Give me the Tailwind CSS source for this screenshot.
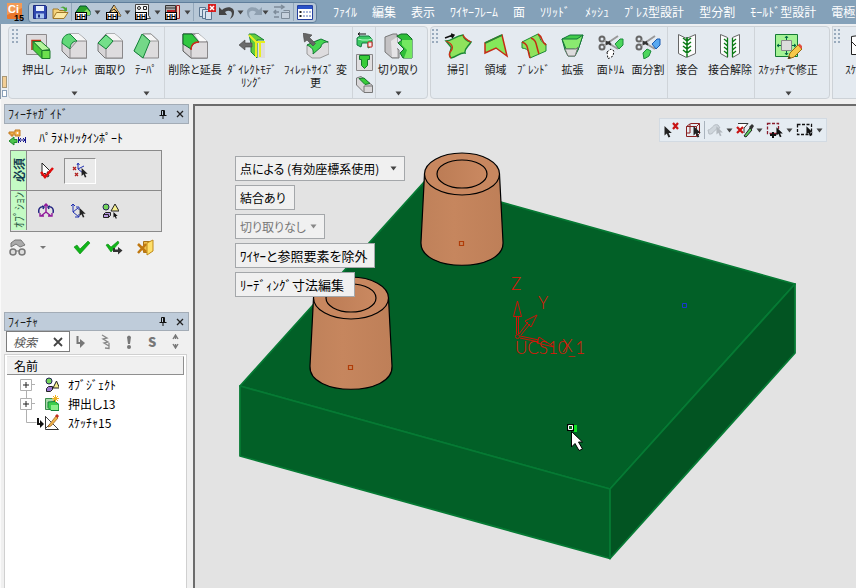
<!DOCTYPE html>
<html lang="ja">
<head>
<meta charset="utf-8">
<title>Ci 15</title>
<script src="https://cdn.jsdelivr.net/npm/@tailwindcss/browser@4"></script>
</head>
<body class="flex h-screen flex-col overflow-hidden bg-[#f0f0f0] font-['Noto_Sans_CJK_JP','Noto_Sans',sans-serif] text-xs leading-4 text-[#1c1c1c] [font-feature-settings:'palt']">

<svg class="hidden" aria-hidden="true">
  <symbol id="dd" viewBox="0 0 7 5"><path d="M0.5 .5h6L3.500 4.500z" fill="#444"/></symbol>
  <symbol id="grip" viewBox="0 0 7 15"><g fill="#9aabbd"><path d="M0 0h2v2H0zM4 0h2v2H4zM0 4h2v2H0zM4 4h2v2H4zM0 8h2v2H0zM4 8h2v2H4zM0 12h2v2H0zM4 12h2v2H4z"/></g></symbol>
  <symbol id="hh" viewBox="0 0 12 8"><rect x=".5" y=".5" width="11" height="7" fill="#fff" stroke="#000"/><text x="6" y="6.500" font-size="7" font-weight="bold" text-anchor="middle" font-family="Liberation Sans" fill="#000">HH</text></symbol>
  <symbol id="cursor" viewBox="0 0 8 12"><path d="M.5 0v9.500L2.800 7.500 4.500 11.500 6.300 10.700 4.600 7H7.800z"/></symbol>
  <symbol id="pin" viewBox="0 0 8 9"><path d="M2.500.5h3v5h-3zM4.500.5v5M.5 5.500h7M4 6v3" fill="none" stroke="#111"/></symbol>
  <symbol id="close" viewBox="0 0 8 8"><path d="M1 1l6 6M7 1L1 7" stroke="#222" stroke-width="1.300" fill="none"/></symbol>
  <symbol id="scissors" viewBox="0 0 26 26"><g fill="none" stroke="#666" stroke-width="2"><circle cx="4" cy="6" r="2.500"/><circle cx="4" cy="14" r="2.500"/><path d="M6 7.500L20 16M6 12.500L20 3" stroke="#999"/></g><path d="M8 8.700l5 3M8 11.300l4-2.700" stroke="#333" stroke-width="2"/></symbol>
</svg>

<header class="flex h-6 shrink-0 items-center gap-4 bg-[#84a1b9] pl-1">
  <div class="flex shrink-0 items-center gap-1">
    <svg width="20" height="20" viewBox="0 0 20 20" aria-label="Ci 15"><rect x="3" y="1" width="15" height="16" rx="1" fill="#e9772c"/><path d="M3 1h15v5L3 13z" fill="#f29a55"/><text x="4" y="11" font-family="Liberation Sans" font-weight="bold" font-size="11" fill="#fff">Ci</text><text x="10" y="19" font-family="Liberation Sans" font-weight="bold" font-size="9" fill="#000">15</text></svg>
    <div class="flex h-[21px] items-center rounded-sm border border-[#5f7e9b] bg-[#b7c7d6] text-[#333]">
      <button class="flex w-[21px] justify-center" aria-label="保存"><svg width="14" height="14" viewBox="0 0 14 14"><path d="M.5.5h12l1 1v12H.5z" fill="#3048b0" stroke="#1c2c80"/><path d="M3 1h8v5H3z" fill="#e8f0fc"/><path d="M3 8.500h8v5H3z" fill="#a8c4f0"/><path d="M5 9.500h2v3H5z" fill="#1c2c80"/></svg></button>
      <button class="flex w-[21px] justify-center" aria-label="開く"><svg width="17" height="15" viewBox="0 0 17 15"><path d="M1 13V4h5l1.500 1.500H13V8" fill="#f4d27a" stroke="#a07828"/><path d="M1 13.500L4.500 7.500H16l-4 6z" fill="#fce9a4" stroke="#a07828"/><path d="M8 3c2-2 4-2 6 0l1-1v4h-4l1.500-1.500C11.500 3 10 2.500 8 3z" fill="#4aa83a"/></svg></button>
      <span class="h-[18px] w-px bg-[#93a7ba]"></span>
      <button class="flex h-[18px] w-[22px] justify-center" aria-label="表示"><svg width="18" height="18" viewBox="0 0 18 18"><path d="M2 9L6 3h6l4 5v4h-4z" fill="#2aa02a" stroke="#053"/><path d="M10 9l3-3 3 3v3h-6z" fill="#8ae060"/><use href="#hh" x="1" y="9" width="12" height="8"/></svg></button>
      <svg class="mr-0.5" width="7" height="5"><use href="#dd"/></svg>
      <button class="flex h-[18px] w-[21px] justify-center" aria-label="形状"><svg width="18" height="18" viewBox="0 0 18 18"><path d="M9 2L2 13h14z" fill="#f5d890" stroke="#222"/><path d="M9 2v10l7 1z" fill="#e0b060"/><path d="M5 9l4-3 4 4" stroke="#222" fill="none"/><use href="#hh" x="1" y="9" width="12" height="8"/></svg></button>
      <svg width="7" height="5"><use href="#dd"/></svg>
      <button class="flex h-[18px] w-[23px] justify-center" aria-label="穴"><svg width="18" height="18" viewBox="0 0 18 18"><path d="M1.500 1.500h13v11l2 3h-15z" fill="#f4f4f4" stroke="#444"/><circle cx="5" cy="5" r="1.500" fill="none" stroke="#222"/><path d="M9.500 3.500h3v3h-3z" fill="none" stroke="#222"/><use href="#hh" x="1" y="9" width="12" height="8"/></svg></button>
      <svg width="7" height="5"><use href="#dd"/></svg>
      <button class="flex h-[18px] w-[23px] justify-center" aria-label="型"><svg width="18" height="18" viewBox="0 0 18 18"><path d="M1.500 2.500h10v10h-10zM2 5h9" fill="#aaa" stroke="#333"/><path d="M12.500 2.500h3v13h-3z" fill="#f3c8b8" stroke="#922"/><path d="M3 8h8" stroke="#b22" stroke-width="2"/><use href="#hh" x="1" y="9" width="12" height="8"/></svg></button>
      <svg class="mr-0.5" width="7" height="5"><use href="#dd"/></svg>
      <span class="h-[18px] w-px bg-[#93a7ba]"></span>
      <button class="flex h-[18px] w-[25px] justify-center" aria-label="削除"><svg width="18" height="18" viewBox="0 0 18 18"><g fill="#d7e2ee" stroke="#5b7590"><path d="M1.500 4.500h6v9h-6z"/><path d="M4.500 6.500h6v9h-6z"/><path d="M7.500 8.500h6v8h-6z"/></g><path d="M10 1h8v8h-8z" fill="#d81e1e"/><path d="M12 3l4 4M16 3l-4 4" stroke="#fff" stroke-width="1.500"/></svg></button>
      <button class="flex w-[18px] justify-center" aria-label="元に戻す"><svg width="18" height="16" viewBox="0 0 18 16"><path d="M3 6C8 1 16 3 15 9c0 3-2 5-4 6 5-8-1-10-5-7l2 3H0V3z" fill="#444"/></svg></button>
      <svg width="7" height="5"><use href="#dd"/></svg>
      <button class="flex w-[18px] justify-center" aria-label="やり直し"><svg width="18" height="16" viewBox="0 0 18 16"><path d="M15 6C10 1 2 3 3 9c0 3 2 5 4 6-5-8 1-10 5-7l-2 3h8V3z" fill="#8fa0b0"/></svg></button>
      <svg class="mr-0.5" width="7" height="5"><use href="#dd"/></svg>
      <button class="flex w-[22px] justify-center" aria-label="更新"><svg width="18" height="18" viewBox="0 0 18 18" fill="none" stroke="#7d8b99"><path d="M1 4h9M1 9h5M1 14h5M8 2l3 2-3 2M3 7L1 9l2 2" stroke-width="1.500"/><path d="M8.500 9.500h8v6h-8zM10.500 7.500h6v2" fill="#c5d0dc"/></svg></button>
      <span class="h-[18px] w-px bg-[#93a7ba]"></span>
      <button class="flex w-[22px] justify-center" aria-label="一覧"><svg width="16" height="15" viewBox="0 0 16 15"><path d="M.5.5h15v14H.5z" fill="#fff" stroke="#2440a0"/><path d="M1 1h14v3H1z" fill="#2a52c8"/><path d="M2.500 7h2M2.500 11h2" stroke="#222" stroke-width="2"/><path d="M6 7h8M6 11h8" stroke="#5570b8" stroke-dasharray="2 1"/></svg></button>
    </div>
  </div>
  <nav class="flex shrink-0 gap-[15px] whitespace-nowrap text-white">
    <a href="#">ﾌｧｲﾙ</a><a href="#">編集</a><a href="#">表示</a><a href="#">ﾜｲﾔｰﾌﾚｰﾑ</a><a href="#">面</a><a href="#">ｿﾘｯﾄﾞ</a><a href="#">ﾒｯｼｭ</a><a href="#">ﾌﾟﾚｽ型設計</a><a href="#">型分割</a><a href="#">ﾓｰﾙﾄﾞ型設計</a><a href="#">電極</a>
  </nav>
</header>

<div class="flex h-[75px] shrink-0 gap-0.5 overflow-hidden border-l border-[#8a98a6] bg-[#eceff2] pt-0.5 text-[11px] leading-[13px]">
  <div class="flex w-[5px] shrink-0 flex-col justify-end gap-0.5 pb-0.5 pl-px">
    <span class="h-3 w-[5px] border border-[#a89878] bg-[#f4cf96]"></span><span class="h-[7px] w-[5px] border border-[#8aa0b8] bg-white"></span>
  </div>

  <section class="flex w-[420px] shrink-0 rounded-sm border border-[#cdd2d7] bg-[#e4eaf0]" aria-label="ソリッド編集">
    <svg class="mt-0.5 mr-px ml-[3px] shrink-0" width="7" height="15"><use href="#grip"/></svg>
    <button class="flex w-9 flex-col items-center pt-1.5"><svg class="mb-1 h-[26px] w-[26px] shrink-0" viewBox="0 0 26 26"><path d="M1.500 1.500h20v20h-20z" fill="#dedcde" stroke="#8c8a8c"/><path d="M7 17V7.500h9" fill="none" stroke="#c03010" stroke-width="1.500"/><path d="M8 8.500h8l9 8-8 1z" fill="#b4f59a" stroke="#1c7a2c"/><path d="M8 8.500l9 9v8l-9-9z" fill="#48c838" stroke="#1c7a2c"/><path d="M17 17.500h8v8h-8z" fill="#6de04e" stroke="#1c7a2c"/></svg>押出し</button>
    <button class="flex w-9 flex-col items-center pt-1.5"><svg class="mb-1 h-[26px] w-[26px] shrink-0" viewBox="0 0 26 26"><path d="M1 10L9 1h9l8 7v17H8L1 18z" fill="#d6d4d6" stroke="#777"/><path d="M9 1h9l8 7H15z" fill="#f5f5f5"/><path d="M9 25V16L16 8h9.500v17z" fill="#dedcde" stroke="#8a888a"/><path d="M1 10C1 4 5 1 9 1l7 7c-4 0-7 3-7 8z" fill="#60d878" stroke="#14833a"/></svg>ﾌｨﾚｯﾄ<svg class="mt-[15px]" width="7" height="5"><use href="#dd"/></svg></button>
    <button class="flex w-9 flex-col items-center pt-1.5"><svg class="mb-1 h-[26px] w-[26px] shrink-0" viewBox="0 0 26 26"><path d="M1 10L9 1h9l8 7v17H8L1 18z" fill="#d6d4d6" stroke="#777"/><path d="M9 1h9l8 7H16z" fill="#f5f5f5"/><path d="M9 25V16L16 8h9.500v17z" fill="#dedcde" stroke="#8a888a"/><path d="M1 10L9 2l7 6-7 8z" fill="#74e08a" stroke="#14833a"/></svg>面取り</button>
    <button class="flex w-9 flex-col items-center pt-1.5"><svg class="mb-1 h-[26px] w-[26px] shrink-0" viewBox="0 0 26 26"><path d="M10 1h8l7.500 7v17H10L1 18z" fill="#dedcde" stroke="#8a888a"/><path d="M10 1h8l7.500 7h-8.500z" fill="#f5f5f5" stroke="#999"/><path d="M1 18L9 1l8 7-7 17z" fill="#74d888" stroke="#14833a"/></svg>ﾃｰﾊﾟ<svg class="mt-[15px]" width="7" height="5"><use href="#dd"/></svg></button>
    <span class="w-px bg-[#cfd4d9]"></span>
    <button class="flex w-[60px] flex-col items-center pt-1.5 whitespace-nowrap"><svg class="mb-1 h-[26px] w-[26px] shrink-0" viewBox="0 0 26 26"><path d="M1 1h16l8.500 8v16H9L1 18z" fill="#d6d4d6" stroke="#555"/><path d="M13 1h4l8 7h-8z" fill="#fafafa"/><path d="M9 25V16c0-4 3-7 8-7h8.500v16z" fill="#dedcde" stroke="#8a888a"/><path d="M1 1h9l7 8c-4 0-8 3-8 7L1 11z" fill="#30c840" stroke="#10602a"/><path d="M9 17c0-5 3-8 8-8" fill="none" stroke="#d02818" stroke-width="1.500"/></svg>削除と延長</button>
    <button class="flex w-[54px] flex-col items-center pt-1.5"><svg class="mb-1 h-[26px] w-[26px] shrink-0" viewBox="0 0 26 26"><path d="M17 8h9v17h-9z" fill="#dedcde"/><path d="M10 1h6l9 6h-7v18l-6-6v-8z" fill="#62cc40" stroke="#17803a"/><path d="M10 2l7 7v15M17 9h9M17 9h4v15" fill="none" stroke="#e8ef20" stroke-width="2"/><path d="M0 12l6-5v3h7v4H6v3z" fill="#6b6b6b" stroke="#444" stroke-width=".6"/></svg>ﾀﾞｲﾚｸﾄﾓﾃﾞ<br>ﾘﾝｸﾞ</button>
    <button class="flex w-[73px] flex-col items-center pt-1.5"><svg class="mb-1 h-[26px] w-[26px] shrink-0" viewBox="0 0 26 26"><path d="M4 12l11-5 11 2v12l-9 4H9l-5-4z" fill="#dedcde" stroke="#999"/><path d="M4 12c4 2 7 4 6 9l8-7c0-3 3-5 7-5l-7-3z" fill="#45d650" stroke="#137a35"/><path d="M0 0l9 2-2.500 2.500 6 6-2.500 2.500-6-6L1.500 9z" fill="#666" stroke="#444" stroke-width=".6"/></svg>ﾌｨﾚｯﾄｻｲｽﾞ 変<br>更</button>
    <span class="w-px bg-[#cfd4d9]"></span>
    <div class="flex w-[22px] flex-col items-center justify-evenly">
      <button aria-label="曲げ"><svg width="17" height="17" viewBox="0 0 17 17"><path d="M1 6l3-2h9l3 3v7l-4 2v-5H6l-1 4-4-2z" fill="#3cc964" stroke="#137a40"/><path d="M2 7l4 1h6l4-1" fill="none" stroke="#b8ffc8"/><path d="M12 10h4v5h-4z" fill="#f4eaea" stroke="#c22"/><path d="M10 2H2l2-1.500M2 2l2 1.500" stroke="#111" fill="none"/></svg></button>
      <button aria-label="穴"><svg width="17" height="17" viewBox="0 0 17 17"><path d="M.5.5h16v16H.5z" fill="#e0dee0" stroke="#8a888a"/><path d="M3.500 1.500h10v4h-2v6l-3 3-3-3v-6h-2z" fill="#38cc38" stroke="#15782c"/></svg></button>
      <button aria-label="ポケット"><svg width="17" height="17" viewBox="0 0 17 17"><path d="M.5 2L5 .5l11.500 9v7H8L.5 9z" fill="#d9d7d9" stroke="#777"/><path d="M3 2.500l5-.5 6 5.500-5 1z" fill="#38cc38" stroke="#15782c"/><path d="M8 16V10h8.500" fill="none" stroke="#777"/></svg></button>
    </div>
    <span class="w-px bg-[#cfd4d9]"></span>
    <button class="flex w-11 flex-col items-center pt-1.5"><svg class="mb-1 h-[26px] w-[29px] shrink-0" viewBox="0 0 29 26"><path d="M1 4l8-3h4v9l-3 3 5 4v8H8l-7-6z" fill="#c4c2c4" stroke="#777"/><path d="M7 8l6-4v20H8z" fill="#e6e4e6"/><path d="M13 3l4-2h6l5 5v19h-9l-3-5 4-4-6-6 4-3z" fill="#2ebd38" stroke="#116a28"/><path d="M18 7h10v18h-8l3-8-5-5z" fill="#74e860"/></svg>切り取り<svg class="mt-[15px]" width="7" height="5"><use href="#dd"/></svg></button>
  </section>

  <section class="flex w-[400px] shrink-0 rounded-sm border border-[#cdd2d7] bg-[#e4eaf0] whitespace-nowrap" aria-label="面">
    <svg class="mt-0.5 ml-px shrink-0" width="7" height="15"><use href="#grip"/></svg>
    <button class="flex w-[38px] flex-col items-center pt-1.5"><svg class="mb-1 h-[26px] w-[28px] shrink-0" viewBox="0 0 28 26"><path d="M2 8c6 0 9-5 17-6 1 4 4 6 8 7-3 5-7 7-6 11-5-1-8 4-14 5-4-3 1-8 0-11z" fill="#8fe35c" stroke="#1b8a35" stroke-width="1.500"/><path d="M2 8c7 3 8 7 4 11-1 2-1 4 1 6M19 2c1 3 4 5 8 7" fill="none" stroke="#d03018" stroke-width="1.300"/><path d="M1 5l8-3M7 1l3 1-2 3" stroke="#111" fill="none" stroke-width="1.400"/></svg>掃引</button>
    <button class="flex w-[37px] flex-col items-center pt-1.5"><svg class="mb-1 h-[26px] w-[26px] shrink-0" viewBox="0 0 26 26"><path d="M2 10L19 2l5 21-11-8-11 5z" fill="#84e85a" stroke="#c42c14" stroke-width="1.500"/><path d="M2 10L19 2" stroke="#1b8a35" stroke-width="1.500"/></svg>領域</button>
    <button class="flex w-[39px] flex-col items-center pt-1.5"><svg class="mb-1 h-[26px] w-[28px] shrink-0" viewBox="0 0 28 26"><path d="M2 9L18 1c3 5 2 8 8 10v7l-16 7c-1-5 0-9-8-10z" fill="#8fe35c" stroke="#1b8a35"/><path d="M2 9c7 2 5 8 8 16M11 5c6 2 5 8 8 16M18 1c5 3 3 8 8 11" fill="none" stroke="#c42c14" stroke-width="1.500"/></svg>ﾌﾞﾚﾝﾄﾞ</button>
    <button class="flex w-[39px] flex-col items-center pt-1.5"><svg class="mb-1 h-[26px] w-[26px] shrink-0" viewBox="0 0 26 26"><path d="M2 6l8-4h13l-5 15-3 6H8L5 17z" fill="#41cb4a" stroke="#14743a"/><path d="M2 6h15l6-4-5 15-4-1H6z" fill="#8aea70" stroke="#14743a"/><path d="M5 16h11l2-2-3 9H8z" fill="#dcdcdc" stroke="#777"/></svg>拡張</button>
    <button class="flex w-[37px] flex-col items-center pt-1.5"><svg class="mb-1 h-[26px] w-[26px] shrink-0" viewBox="0 0 26 26"><use href="#scissors"/><path d="M17 11l5-5h3v6l-4 4z" fill="#4cd65c" stroke="#1a8a3a"/><path d="M9 19l4-3 3 2-1 5-5 3z" fill="#fff" stroke="#111" stroke-dasharray="2 1.500"/></svg>面ﾄﾘﾑ</button>
    <button class="flex w-[38px] flex-col items-center pt-1.5"><svg class="mb-1 h-[26px] w-[26px] shrink-0" viewBox="0 0 26 26"><use href="#scissors"/><path d="M17 11l5-5h3v6l-4 4z" fill="#58a8f0" stroke="#1a5ab0"/><path d="M8 20l4-4 4 2-2 5-5 3z" fill="#4cd65c" stroke="#1a8a3a"/></svg>面分割</button>
    <span class="w-px bg-[#cfd4d9]"></span>
    <button class="flex w-[38px] flex-col items-center pt-1.5"><svg class="mb-1 h-[26px] w-5 shrink-0" viewBox="0 0 20 26"><path d="M1.500 1.500l8 4 9-4v19l-9 4-8-4z" fill="#fcfcfc" stroke="#666"/><path d="M10 4v20M6 5l4 3 4-3M6 9l4 3 4-3M6 13l4 3 4-3M6 17l4 3 4-3" fill="none" stroke="#0a7a14" stroke-width="1.500"/></svg>接合</button>
    <button class="flex w-12 flex-col items-center pt-1.5"><svg class="mb-1 h-[26px] w-[22px] shrink-0" viewBox="0 0 22 26"><path d="M1.500 1.500l7 3v20l-7-4zM20.500 1.500l-7 3v20l7-4z" fill="#fcfcfc" stroke="#666"/><path d="M8.500 5v19M5 6l3 2.500M5 10l3 2.500M5 14l3 2.500M5 18l3 2.500M13.500 5v19M17 6l-3 2.500M17 10l-3 2.500M17 14l-3 2.500M17 18l-3 2.500" fill="none" stroke="#0a7a14" stroke-width="1.300"/></svg>接合解除</button>
    <span class="w-px bg-[#cfd4d9]"></span>
    <button class="flex w-[66px] flex-col items-center pt-1.5"><svg class="mb-1 h-[26px] w-[28px] shrink-0" viewBox="0 0 28 26"><path d="M1.500 1.500h22v22h-22z" fill="#a4f294" stroke="#147a34"/><path d="M7.500 7.500h10v10h-10z" fill="#dcdcdc" stroke="#888"/><path d="M12.500 3v4M12.500 18v4M3 12.500h4M18 12.500h4M11 5l1.500-2L14 5M11 20l1.500 2 1.500-2M5 11l-2 1.500L5 14M20 11l2 1.500-2 1.500" stroke="#064" fill="none"/><path d="M14 26l2-6 8-8 4 4-8 8z" fill="#f7c84a" stroke="#9a6a10"/><path d="M24 12l1.500-1.500 3 3L27 16z" fill="#e25040"/><path d="M14 26l1-3 2 2z" fill="#333"/></svg>ｽｹｯﾁｬで修正<svg class="mt-[15px]" width="7" height="5"><use href="#dd"/></svg></button>
  </section>

  <section class="flex w-[120px] shrink-0 border border-[#cdd2d7] bg-[#e4eaf0]" aria-label="スケッチャ">
    <svg class="mt-0.5 ml-px shrink-0" width="7" height="15"><use href="#grip"/></svg>
    <button class="flex w-9 flex-col items-center pt-1.5 whitespace-nowrap"><svg class="mb-1 h-[26px] w-[18px] shrink-0" viewBox="0 0 18 26"><path d="M1.500 3.500l15-2v20h-15z" fill="#fff" stroke="#222"/><path d="M2 9l9 9" stroke="#222"/></svg>ｽｹｯﾁｬ</button>
  </section>
</div>

<div class="flex min-h-0 flex-1 border-l border-[#fafafa]">
  <aside class="flex w-[192px] shrink-0 flex-col pt-[5px] pl-[3px]">
    <section aria-label="フィーチャガイド" class="mr-1 h-52">
      <h2 class="flex h-5 items-center gap-[9px] border border-[#a3acb6] bg-[#bfccda] pr-1 pl-[3px]"><span class="flex-1">ﾌｨｰﾁｬｶﾞｲﾄﾞ</span><button aria-label="固定"><svg width="8" height="9"><use href="#pin"/></svg></button><button aria-label="閉じる"><svg width="8" height="8"><use href="#close"/></svg></button></h2>
      <div class="flex h-[26px] items-center gap-3 pt-0.5 pl-1">
        <svg width="19" height="18" viewBox="0 0 19 18"><path d="M1 3h6V1h5v6H7V5H5v2H3V5H1z" fill="#f2b04a" stroke="#c07820"/><circle cx="9.500" cy="4" r="1" fill="#fff"/><path d="M1 12l5-4v2.500h3v3H6V16z" fill="#4cc44c" stroke="#1f8a2c"/><path d="M10.500 8v6M17.500 8v6M10 11h8M13 9l-2 2 2 2M15 9l2 2-2 2" stroke="#14148c" fill="none"/></svg>
        <span class="text-black">ﾊﾟﾗﾒﾄﾘｯｸｲﾝﾎﾟｰﾄ</span>
      </div>
      <div class="mr-[27px] ml-1.5 grid grid-cols-[16px_1fr] grid-rows-2 border border-[#8a8a8a] bg-[#e3e3e3]">
        <div class="flex h-10 items-center justify-center border-r border-b border-[#8a8a8a] bg-[#c4fbc4]"><span class="rotate-180 font-bold text-[#143c50] [text-orientation:sideways] [writing-mode:vertical-rl]">必須</span></div>
        <div class="flex h-10 items-center gap-px border-b border-[#8a8a8a] pl-1">
          <button class="flex h-[26px] w-8 items-center justify-center" aria-label="要素選択"><svg width="14" height="17" viewBox="0 0 14 17"><path d="M2 1v13l3-3 2 4 2-1-2-4h4z" fill="#fff" stroke="#222"/><path d="M1 10l4 5 8-9" stroke="#e00c0c" stroke-width="2.500" fill="none"/></svg></button>
          <button class="flex h-[26px] w-8 items-center justify-center border-t border-r border-b border-l border-t-[#909090] border-r-white border-b-white border-l-[#909090] bg-[#eaeaea]" aria-label="点指定"><svg width="16" height="16" viewBox="0 0 16 16"><path d="M1 4l3 3M4 4L1 7M3 10l3 3M6 10l-3 3" stroke="#b02020" stroke-width="1.300"/><path d="M6 1v5l6-3M6 6l5 4M5 2l1-2 1.500 2" stroke="#2030b0" fill="none"/><use href="#cursor" x="9" y="5" width="7" height="10" fill="#222"/></svg></button>
        </div>
        <div class="flex h-[39px] items-center justify-center overflow-hidden border-r border-[#8a8a8a] bg-[#c4fbc4]"><span class="rotate-180 text-xs whitespace-nowrap text-[#2f6048] [text-orientation:sideways] [writing-mode:vertical-rl]">ｵﾌﾟｼｮﾝ</span></div>
        <div class="flex h-[39px] items-center pl-[3px]">
          <button class="flex w-8 justify-center" aria-label="回転"><svg width="16" height="15" viewBox="0 0 16 15" fill="none"><path d="M8 1v8l-5 4M8 9l5 4M6 3l2-2 2 2M6 13H2v-3M10 13h4v-3" stroke="#90189a" stroke-width="1.400"/><path d="M6 4C2 3 0 6 1 10M10 4c4-1 6 2 5 6M4 3l2 1-1 2M12 3l-2 1 1 2" stroke="#222280" stroke-width="1.500"/></svg></button>
          <button class="flex w-8 justify-center" aria-label="軸"><svg width="16" height="16" viewBox="0 0 16 16"><path d="M3 1v8l5-4M3 9l6 5M1 3l2-2 2 2M6 4h3v3M5 14h4v-3" stroke="#2030b0" fill="none"/><use href="#cursor" x="9" y="5" width="7" height="10" fill="#222"/></svg></button>
          <button class="flex w-8 justify-center" aria-label="オブジェクト"><svg width="17" height="16" viewBox="0 0 17 16"><circle cx="4" cy="4" r="3" fill="#74d45c" stroke="#225"/><path d="M9 8l4-7 4 7z" fill="#f7f090" stroke="#222"/><path d="M1.500 11.500l2-2h5v3l-2 2h-5zM1.500 11.500h5v3" fill="#b89ae0" stroke="#222"/><use href="#cursor" x="11" y="9" width="5" height="7" fill="#111"/></svg></button>
        </div>
      </div>
      <div class="flex h-[31px] items-center pl-[5px]">
        <button class="w-[17px]" aria-label="プレビュー"><svg width="17" height="17" viewBox="0 0 17 17" fill="#aaa" stroke="#777"><path d="M2 8V4l4-3h6l4 5-5 2-4-3z"/><circle cx="4" cy="13" r="3" fill="#ddd" stroke-width="1.500"/><circle cx="13" cy="13" r="3" fill="#ddd" stroke-width="1.500"/><path d="M7 12h3"/></svg></button>
        <svg class="mr-[27px] ml-3.5" width="6" height="5" viewBox="0 0 6 5"><path d="M0 1h6L3 4z" fill="#777"/></svg>
        <button class="w-[18px]" aria-label="OK"><svg width="18" height="15" viewBox="0 0 18 15"><path d="M1 7l3-2 3 4 8-8 2 2L7 14z" fill="#10b418" stroke="#0c8a12" stroke-width=".6"/></svg></button>
        <button class="ml-3.5 w-[18px]" aria-label="適用"><svg width="18" height="15" viewBox="0 0 18 15"><path d="M1 5l2-1 3 3 7-6 1 2-8 9z" fill="#10b418" stroke="#0c8a12" stroke-width=".6"/><path d="M8 8v4h5v2.500l4.500-4L13 7v2.500h-3V8z" fill="#333"/></svg></button>
        <button class="ml-3.5" aria-label="終了"><svg width="18" height="17" viewBox="0 0 18 17"><path d="M6.500 2.500h7v11h-7z" fill="#f0c050" stroke="#a8741a"/><path d="M10 4l6-3v11l-6 4z" fill="#ffe06a" stroke="#c08a1a"/><path d="M1 5l8 8M9 5l-8 9" stroke="#c07810" stroke-width="2.500"/></svg></button>
      </div>
    </section>

    <section aria-label="フィーチャ" class="flex min-h-0 flex-1 flex-col">
      <h2 class="mr-1 flex h-[19px] shrink-0 items-center gap-[9px] border border-[#a3acb6] bg-[#bfccda] pr-1 pl-[3px]"><span class="flex-1">ﾌｨｰﾁｬ</span><button aria-label="固定"><svg width="8" height="9"><use href="#pin"/></svg></button><button aria-label="閉じる"><svg width="8" height="8"><use href="#close"/></svg></button></h2>
      <div class="flex h-[21px] shrink-0 items-center pl-0.5">
        <label class="flex h-[21px] w-16 items-center border border-[#7c7c7c] bg-white pr-1.5 pl-1.5"><input type="text" aria-label="検索" placeholder="検索" class="min-w-0 flex-1 bg-transparent text-xs italic outline-none placeholder:text-[#555]"><svg width="10" height="10" viewBox="0 0 10 10"><path d="M1 1l8 8M9 1L1 9" stroke="#444" stroke-width="1.800"/></svg></label>
        <div class="flex flex-1 items-center justify-between pr-3.5 pl-1.5 text-[#777]">
          <button aria-label="次へ"><svg width="9" height="12" viewBox="0 0 9 12"><path d="M1.500 0v7H5" fill="none" stroke="#777" stroke-width="2"/><path d="M4 3l5 4-5 5z" fill="#777"/></svg></button>
          <button aria-label="ばね"><svg width="10" height="16" viewBox="0 0 10 16"><path d="M1 1l5 3-4 1 5 3-4 1 5 3M8 9v5.500L4 14" fill="none" stroke="#888" stroke-width="1.300"/></svg></button>
          <button aria-label="警告"><svg width="6" height="14" viewBox="0 0 6 14"><path d="M1 2Q3-1 5 2L4 9H2z" fill="#777"/><circle cx="3" cy="12" r="2" fill="#777"/></svg></button>
          <button class="text-[13px] font-black">S</button>
          <button aria-label="並べ替え"><svg width="7" height="15" viewBox="0 0 7 15"><path d="M1 5l2.500-4L6 5M1 10l2.500 4L6 10M3.500 1v4M3.500 10v4" fill="none" stroke="#777" stroke-width="1.400"/></svg></button>
        </div>
      </div>
      <div class="mt-0.5 mr-1.5 min-h-0 flex-1 border border-b-0 border-[#d0d0d0] bg-white p-0.5 pt-px">
        <div class="flex h-[19px] items-center border-t border-r border-b border-t-[#e4e4e4] border-r-[#8f8f8f] border-b-[#8f8f8f] bg-[#f0f0f0] pl-[7px] text-black">名前</div>
        <ul class="text-black" role="tree">
          <li class="flex h-[19px] items-center gap-2" role="treeitem"><svg width="52" height="19" viewBox="0 0 52 19"><path d="M19.500 9v10M25 9.500h3" stroke="#b0b0b0"/><path d="M13.500 4.500h11v11h-11z" fill="#fff" stroke="#b0b0b0"/><path d="M16 10h6M19 7v6" stroke="#222"/><circle cx="42" cy="6" r="3" fill="#74d45c" stroke="#225"/><path d="M46 13l3.500-7 3 7z" fill="#f7f090" stroke="#222"/><path d="M39.500 13.500l2-2h4v3l-2 2h-4z" fill="#9a78d0" stroke="#222"/></svg><span class="pl-px">ｵﾌﾞｼﾞｪｸﾄ</span></li>
          <li class="flex h-[19px] items-center gap-2" role="treeitem"><svg width="52" height="19" viewBox="0 0 52 19"><path d="M19.500 0v19M25 9.500h3" stroke="#b0b0b0"/><path d="M13.500 4.500h11v11h-11z" fill="#fff" stroke="#b0b0b0"/><path d="M16 10h6M19 7v6" stroke="#222"/><path d="M38.500 4.500h9v11h-9z" fill="#a8d8a8" stroke="#3a8a4a"/><path d="M41 8l7-.500 4 3v6h-8l-3-3z" fill="#3cce4a" stroke="#14803a"/><path d="M44 11h7v5h-7z" fill="#8af08a"/><path d="M48.500 1v7M45 4.500h7M46 2l5 5M51 2l-5 5" stroke="#f0b020"/></svg><span class="pl-px">押出し13</span></li>
          <li class="flex h-[19px] items-center gap-2" role="treeitem"><svg width="52" height="19" viewBox="0 0 52 19"><path d="M19.500 0v9.500h10" stroke="#b0b0b0" fill="none"/><path d="M31 5v6h3" fill="none" stroke="#111" stroke-width="2"/><path d="M33 7l4 4-4 4z" fill="#111"/><path d="M38.500 3.500v13h13z" fill="#fff" stroke="#333"/><path d="M38 3l13 13M38 16l5-5" stroke="#444"/><path d="M42 12l7-9 2 2-7 8-3 1z" fill="#f2b54a" stroke="#905818" stroke-width=".7"/><path d="M48 3l2-2 2 2-1.500 2z" fill="#c03020"/></svg><span class="pl-px">ｽｹｯﾁｬ15</span></li>
        </ul>
      </div>
    </section>
  </aside>

  <main class="relative mt-[5px] min-w-0 flex-1 overflow-hidden border-t-2 border-l-2 border-[#6c6c6c] bg-[#e3e3e3]">
    <svg class="absolute inset-0 h-full w-full" role="img" aria-label="3Dモデル">
      <defs>
        <linearGradient id="side"><stop offset="0" stop-color="#bf815a"/><stop offset=".4" stop-color="#c6865e"/><stop offset="1" stop-color="#be7f58"/></linearGradient>
        <linearGradient id="bore"><stop offset="0" stop-color="#bc7c55"/><stop offset="1" stop-color="#ca8961"/></linearGradient>
        <g id="boss" stroke="#000" stroke-width="1.200">
          <path d="M-37.500 0L-41 68c-2 31 84 31 82 0L37.500 0z" fill="url(#side)"/>
          <ellipse rx="37.500" ry="21" fill="#c8875f"/><ellipse cy="0" rx="25" ry="14" fill="url(#bore)"/>
          <path d="M-2.500 67.500h4v4h-4z" fill="none" stroke="#b03c08"/>
        </g>
      </defs>
      <g transform="translate(-195 -106)">
        <g stroke="#067a34" stroke-width="1.800" stroke-linejoin="round">
          <path d="M240 386L425 181 795 284 610 489z" fill="#026027"/>
          <path d="M240 386L610 489V558.500L240 456z" fill="#026027"/>
          <path d="M610 489L795 284V353L610 558.500z" fill="#025422"/>
        </g>
        <use href="#boss" x="462" y="174"/>
        <use href="#boss" x="351" y="298"/>
        <g fill="none" stroke="#d01408">
          <circle cx="517.500" cy="336.500" r="2"/>
          <path d="M516.500 334V316M518.500 334V316M513.500 316.500h8L517.500 301zM519 334l9-12M521 335l9-11M525 321l6 6 6-12zM520 336l19 4M520 338l19 4M539 337l-2 6 17 4z"/>
        </g>
        <g fill="#e01408" font-family="Lato" font-weight="300" font-size="17"><text x="511" y="290">Z</text><text x="538" y="309">Y</text><text x="562" y="352">X</text><text x="515" y="354">UCS10_1</text></g>
        <path d="M682.500 303.500h4v4h-4z" fill="none" stroke="#1838d0"/>
        <path d="M574 425h3v7h-3z" fill="#0ce020"/>
        <path d="M567 424h7v7h-7z" fill="#000"/><path d="M568.500 425.500h4v4h-4z" fill="#0a6a1c" stroke="#fff"/>
        <path d="M571.500 431.500v15.500l3.500-3.500 4 7 3.500-1.500-4-7h4z" fill="#fff" stroke="#000"/>
      </g>
    </svg>

    <div class="absolute top-[50px] left-10 flex flex-col items-start gap-1 text-[13px] text-black">
      <div class="relative"><select aria-label="配置方法" class="h-[25px] w-[170px] appearance-none border border-[#a4a7aa] bg-[#f0f0f0] pl-1 text-xs outline-none"><option>点による (有効座標系使用)</option></select><svg class="pointer-events-none absolute top-2.5 right-2" width="7" height="5"><use href="#dd"/></svg></div>
      <button class="h-[25px] w-15 border border-[#a4a7aa] bg-[#f0f0f0] pl-1 text-left text-xs whitespace-nowrap">結合あり</button>
      <div class="relative"><select disabled aria-label="切り取り" class="h-[25px] w-[90px] appearance-none border border-[#a4a7aa] bg-[#f0f0f0] pl-1 text-xs text-[#777] opacity-100 outline-none"><option>切り取りなし</option></select><svg class="pointer-events-none absolute top-2.5 right-2 opacity-60" width="7" height="5"><use href="#dd"/></svg></div>
      <button class="h-[25px] w-[140px] border border-[#a4a7aa] bg-[#f0f0f0] pl-1 text-left whitespace-nowrap">ﾜｲﾔｰと参照要素を除外</button>
      <button class="h-[25px] w-[120px] border border-[#a4a7aa] bg-[#f0f0f0] pl-1 text-left whitespace-nowrap">ﾘｰﾃﾞｨﾝｸﾞ寸法編集</button>
    </div>

    <div class="absolute top-3 right-[29px] flex h-6 items-center border border-[#d2dae2] bg-[#e5ecf2] pr-[3px] pl-px" role="toolbar" aria-label="選択">
      <button class="flex w-[21px] justify-center" aria-label="選択解除"><svg width="16" height="16" viewBox="0 0 16 16"><use href="#cursor" x="0" y="4" width="8" height="12" fill="#222"/><path d="M9 1l5 6M14 1L9 7" stroke="#c81414" stroke-width="2.200"/></svg></button>
      <button class="flex w-[22px] justify-center" aria-label="立体選択"><svg width="16" height="16" viewBox="0 0 16 16"><path d="M1.500 4.500h10v10h-10zM1.500 4.500l4-3h9v10l-3 3M11.500 4.500l3-3M5 2v9H2" fill="none" stroke="#8a2020"/><use href="#cursor" x="8" y="4" width="8" height="12" fill="#222"/></svg></button>
      <span class="h-[18px] w-px bg-[#a9b3bd]"></span>
      <button class="flex w-[21px] justify-center" disabled aria-label="面選択"><svg width="17" height="16" viewBox="0 0 17 16"><path d="M1 8c4 0 5-7 10-5l2 3c-6 0-6 7-11 6z" fill="#cfd6dc" stroke="#b5bcc3"/><use href="#cursor" x="9" y="4" width="7" height="11" fill="#b2b8be"/></svg></button>
      <svg width="7" height="5"><use href="#dd"/></svg>
      <button class="flex w-[23px] justify-center" aria-label="フィルタ"><svg width="18" height="16" viewBox="0 0 18 16"><path d="M2 1.500h10L8 6v5" fill="#fff" stroke="#333"/><path d="M1 5l6 6M7 5l-6 6" stroke="#c81414" stroke-width="2.200"/><path d="M8 14l6-8 2 2-6 7z" fill="#5cd060" stroke="#222"/><path d="M13 5l3-3 2 2-2.500 4z" fill="#333"/></svg></button>
      <svg width="7" height="5"><use href="#dd"/></svg>
      <button class="flex w-[23px] justify-center" aria-label="追加選択"><svg width="17" height="17" viewBox="0 0 17 17"><path d="M1.500 1.500h11v10h-11z" fill="none" stroke="#8a1c2c" stroke-width="1.300" stroke-dasharray="3 1.500"/><path d="M4 13h6M7 10v6" stroke="#111" stroke-width="2"/><use href="#cursor" x="10" y="5" width="7" height="11" fill="#111"/></svg></button>
      <svg width="7" height="5"><use href="#dd"/></svg>
      <button class="flex w-[23px] justify-center" aria-label="窓選択"><svg width="18" height="16" viewBox="0 0 18 16"><path d="M1.500 2.500h14v10h-14z" fill="none" stroke="#111" stroke-width="1.300" stroke-dasharray="3 1.500"/><use href="#cursor" x="10" y="4" width="7" height="11" fill="#111"/></svg></button>
      <svg width="7" height="5"><use href="#dd"/></svg>
    </div>
  </main>
</div>
</body>
</html>
